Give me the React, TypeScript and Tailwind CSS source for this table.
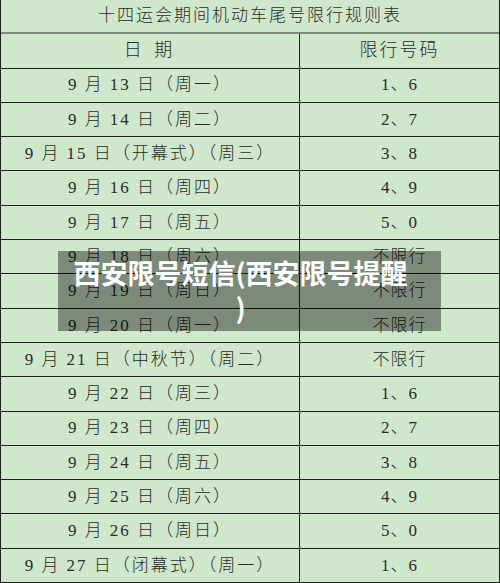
const rows: [string, string][] = [
  ["9 月 13 日（周一）", "1、6"],
  ["9 月 14 日（周二）", "2、7"],
  ["9 月 15 日（开幕式）（周三）", "3、8"],
  ["9 月 16 日（周四）", "4、9"],
  ["9 月 17 日（周五）", "5、0"],
  ["9 月 18 日（周六）", "不限行"],
  ["9 月 19 日（周日）", "不限行"],
  ["9 月 20 日（周一）", "不限行"],
  ["9 月 21 日（中秋节）（周二）", "不限行"],
  ["9 月 22 日（周三）", "1、6"],
  ["9 月 23 日（周四）", "2、7"],
  ["9 月 24 日（周五）", "3、8"],
  ["9 月 25 日（周六）", "4、9"],
  ["9 月 26 日（周日）", "5、0"],
  ["9 月 27 日（闭幕式）（周一）", "1、6"],
];

const font = { fontFamily: '"Liberation Serif", "Noto Sans CJK SC", serif' };

export default function App() {
  return (
    <div className="relative w-[500px] h-[583px] overflow-hidden bg-[#cfe7cb] text-[#2b2b2b] font-light" style={font}>
      <div className="flex flex-col border-l border-r border-[#1f1f1f]">
        <div className="h-[34.3px] flex items-center justify-center border-b-2 border-[#7d8a7b] text-[17px] tracking-[2px]">
          十四运会期间机动车尾号限行规则表
        </div>
        <div className="h-[34.3px] flex border-b border-[#1f1f1f] text-[18px]">
          <div className="w-[299px] flex items-center justify-center border-r border-[#1f1f1f] tracking-[4px]">日 期</div>
          <div className="flex-1 flex items-center justify-center tracking-[2px]">限行号码</div>
        </div>
        {rows.map(([d, n]) => (
          <div key={d} className="h-[34.3px] shrink-0 flex border-b border-[#1f1f1f] text-[17px]">
            <div className="w-[299px] flex items-center justify-center border-r border-[#1f1f1f] tracking-[2px]">{d}</div>
            <div className="flex-1 flex items-center justify-center tracking-[1px]">{n}</div>
          </div>
        ))}
      </div>

      <div
        className="absolute left-[58px] top-[251px] w-[383px] h-[80px] bg-black/40 pl-[0px] pr-[18px] pt-[4px] text-center text-white font-bold text-[27px] leading-[35px]"
        style={{ fontFamily: '"Noto Sans CJK SC", sans-serif' }}
      >
        西安限号短信(西安限号提醒<br />)
      </div>
    </div>
  );
}
